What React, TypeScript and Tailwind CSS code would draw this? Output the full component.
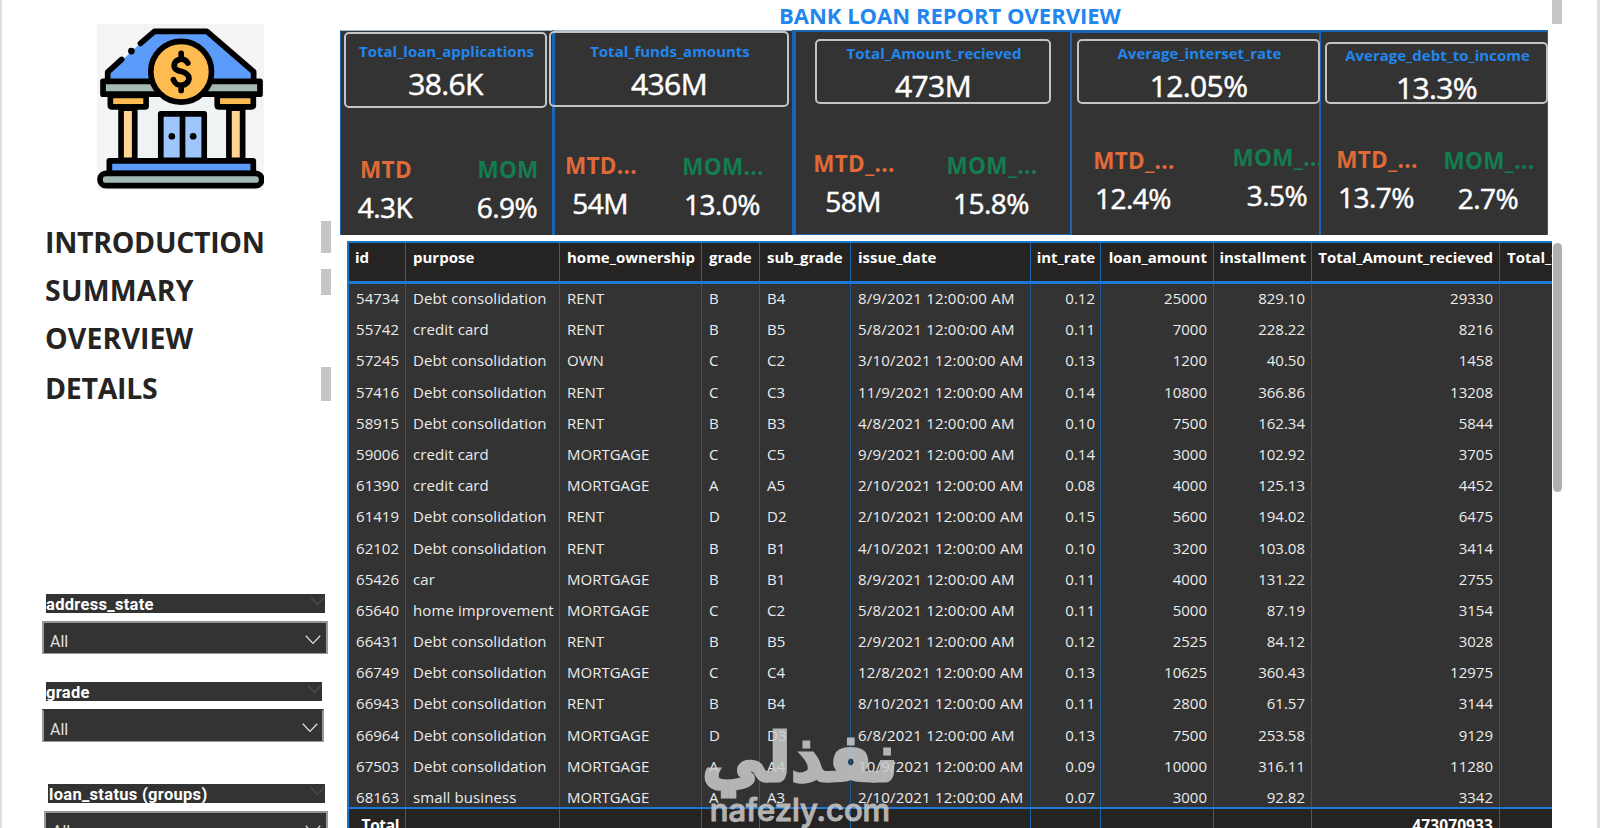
import React from 'react';

interface Metric {
  label: string;
  value: string;
  className: string;
}

interface Kpi {
  title: string;
  value: string;
  panel: string;
  card: string;
  metrics: string;
  mtd: Metric;
  mom: Metric;
}

interface Slicer {
  name: string;
  header: string;
  box: string;
}

const kpis: Kpi[] = [
  {
    title: 'Total_loan_applications',
    value: '38.6K',
    panel: 'w-[212px] border-t border-t-[#a9bccb] border-l border-l-[#1a66b0]',
    card: 'ml-[3px] mt-[1px] h-[76px] w-[203px] pt-[5px]',
    metrics: 'gap-[32px]',
    mtd: { label: 'MTD', value: '4.3K', className: 'mt-[155px] -ml-px' },
    mom: { label: 'MOM', value: '6.9%', className: 'mt-[154.5px]' },
  },
  {
    title: 'Total_funds_amounts',
    value: '436M',
    panel: 'w-[240px] border-t border-t-[#a9bccb] border-l-[3px] border-l-[#1a66b0]',
    card: '-ml-[6px] mt-0 h-[76px] w-[240px] pt-[6px]',
    metrics: 'gap-[32px]',
    mtd: { label: 'MTD...', value: '54M', className: 'mt-[151px]' },
    mom: { label: 'MOM...', value: '13.0%', className: 'mt-[152px]' },
  },
  {
    title: 'Total_Amount_recieved',
    value: '473M',
    panel: 'w-[278px] border-t-2 border-b border-l-4 border-[#1a66b0]',
    card: 'ml-[19px] mt-[7px] h-[65px] w-[236px]',
    metrics: 'pl-[12px] gap-[48px]',
    mtd: { label: 'MTD_...', value: '58M', className: 'mt-[148px]' },
    mom: { label: 'MOM_...', value: '15.8%', className: 'mt-[150px]' },
  },
  {
    title: 'Average_interset_rate',
    value: '12.05%',
    panel: 'w-[249px] border-t-[3px] border-l-2 border-[#1a66b0]',
    card: 'ml-[5px] mt-[6px] h-[65px] w-[243px]',
    metrics: 'pl-[16px] gap-[54px]',
    mtd: { label: 'MTD_...', value: '12.4%', className: 'mt-[144px]' },
    mom: { label: 'MOM_...', value: '3.5%', className: 'mt-[141px]' },
  },
  {
    title: 'Average_debt_to_income',
    value: '13.3%',
    panel: 'w-[229px] border-t-2 border-l-2 border-r border-[#1a66b0]',
    card: 'ml-[4px] mt-[10px] h-[62px] w-[223px] *:-translate-y-px',
    metrics: 'pl-[10px] gap-[22px]',
    mtd: { label: 'MTD_...', value: '13.7%', className: 'mt-[144px]' },
    mom: { label: 'MOM_...', value: '2.7%', className: 'mt-[145px]' },
  },
];

const columns = [
  { name: 'id', width: 'w-[57px]', head: 'pl-[6px] text-left', cell: 'pr-[6px] text-right' },
  { name: 'purpose', width: 'w-[154px]', head: 'pl-[7px] text-left', cell: 'pl-[7px] text-left tracking-[0.1px]' },
  { name: 'home_ownership', width: 'w-[142px]', head: 'pl-[7px] text-left', cell: 'pl-[7px] text-left' },
  { name: 'grade', width: 'w-[58px]', head: 'pl-[7px] text-left', cell: 'pl-[7px] text-left' },
  { name: 'sub_grade', width: 'w-[91px]', head: 'pl-[7px] text-left', cell: 'pl-[7px] text-left' },
  { name: 'issue_date', width: 'w-[180px]', head: 'pl-[7px] text-left', cell: 'pl-[7px] text-left tracking-[0.2px]' },
  { name: 'int_rate', width: 'w-[70px]', head: 'pr-[5px] text-right', cell: 'pr-[5px] text-right' },
  { name: 'loan_amount', width: 'w-[113px]', head: 'pr-[6px] text-right', cell: 'pr-[6px] text-right' },
  { name: 'installment', width: 'w-[98px]', head: 'pr-[5px] text-right', cell: 'pr-[6px] text-right' },
  { name: 'Total_Amount_recieved', width: 'w-[188px]', head: 'pr-[6px] text-right', cell: 'pr-[6px] text-right' },
];

const rows = [
  ['54734', 'Debt consolidation', 'RENT', 'B', 'B4', '8/9/2021 12:00:00 AM', '0.12', '25000', '829.10', '29330'],
  ['55742', 'credit card', 'RENT', 'B', 'B5', '5/8/2021 12:00:00 AM', '0.11', '7000', '228.22', '8216'],
  ['57245', 'Debt consolidation', 'OWN', 'C', 'C2', '3/10/2021 12:00:00 AM', '0.13', '1200', '40.50', '1458'],
  ['57416', 'Debt consolidation', 'RENT', 'C', 'C3', '11/9/2021 12:00:00 AM', '0.14', '10800', '366.86', '13208'],
  ['58915', 'Debt consolidation', 'RENT', 'B', 'B3', '4/8/2021 12:00:00 AM', '0.10', '7500', '162.34', '5844'],
  ['59006', 'credit card', 'MORTGAGE', 'C', 'C5', '9/9/2021 12:00:00 AM', '0.14', '3000', '102.92', '3705'],
  ['61390', 'credit card', 'MORTGAGE', 'A', 'A5', '2/10/2021 12:00:00 AM', '0.08', '4000', '125.13', '4452'],
  ['61419', 'Debt consolidation', 'RENT', 'D', 'D2', '2/10/2021 12:00:00 AM', '0.15', '5600', '194.02', '6475'],
  ['62102', 'Debt consolidation', 'RENT', 'B', 'B1', '4/10/2021 12:00:00 AM', '0.10', '3200', '103.08', '3414'],
  ['65426', 'car', 'MORTGAGE', 'B', 'B1', '8/9/2021 12:00:00 AM', '0.11', '4000', '131.22', '2755'],
  ['65640', 'home improvement', 'MORTGAGE', 'C', 'C2', '5/8/2021 12:00:00 AM', '0.11', '5000', '87.19', '3154'],
  ['66431', 'Debt consolidation', 'RENT', 'B', 'B5', '2/9/2021 12:00:00 AM', '0.12', '2525', '84.12', '3028'],
  ['66749', 'Debt consolidation', 'MORTGAGE', 'C', 'C4', '12/8/2021 12:00:00 AM', '0.13', '10625', '360.43', '12975'],
  ['66943', 'Debt consolidation', 'RENT', 'B', 'B4', '8/10/2021 12:00:00 AM', '0.11', '2800', '61.57', '3144'],
  ['66964', 'Debt consolidation', 'MORTGAGE', 'D', 'D3', '6/8/2021 12:00:00 AM', '0.13', '7500', '253.58', '9129'],
  ['67503', 'Debt consolidation', 'MORTGAGE', 'A', 'A4', '10/9/2021 12:00:00 AM', '0.09', '10000', '316.11', '11280'],
  ['68163', 'small business', 'MORTGAGE', 'A', 'A3', '2/10/2021 12:00:00 AM', '0.07', '3000', '92.82', '3342'],
];

const totals = ['Total', '', '', '', '', '', '', '', '', '473070933'];

const navItems = [
  { name: 'INTRODUCTION', row: 'h-[48px] tracking-[-0.3px]', thumb: 'h-[32px] mt-[3px]' },
  { name: 'SUMMARY', row: 'h-[48px] tracking-[0.2px]', thumb: 'h-[26px] mt-[3px]' },
  { name: 'OVERVIEW', row: 'h-[50px] tracking-[0.1px]', thumb: 'h-0' },
  { name: 'DETAILS', row: 'h-[48px] tracking-[-0.3px]', thumb: 'h-[34px] mt-[3px]' },
];

const slicers: Slicer[] = [
  { name: 'address_state', header: 'ml-[44px] w-[279px]', box: 'ml-[40px] w-[286px] border-t-[#969696] pr-[5px]' },
  { name: 'grade', header: 'ml-[44px] w-[276px]', box: 'ml-[40px] w-[282px] border-t-[#333] pr-[4px]' },
  { name: 'loan_status (groups)', header: 'ml-[46px] w-[277px] pl-px', box: 'ml-[42px] w-[284px] border-t-[#969696] pr-[5px]' },
];

const BankLogo = () => (
  <svg viewBox="52 44 500 497" className="ml-[95px] h-[166px] w-[167px]" stroke="#000" strokeWidth={17} strokeLinejoin="round" strokeLinecap="round">
    <rect x="52" y="44" width="500" height="497" fill="#f4f4f5" stroke="none" />
    <rect x="172" y="262" width="270" height="190" fill="#eff3f3" stroke="none" />
    <path d="M84 212V188L130 150L182 102L224 66H381L521 187V212Z" fill="#5b9cfb" stroke="none" />
    <path d="M84 212V188L126 150M182 102L224 66H381L521 187V212" fill="none" />
    <circle cx="155" cy="125" r="10" fill="#000" stroke="none" />
    <path d="M92 258H199V290Q199 292 195 292H98Q92 292 92 288Z" fill="#fdbb50" />
    <path d="M412 258H520V288Q520 292 514 292H418Q412 292 412 288Z" fill="#fdbb50" />
    <rect x="70" y="216" width="470" height="38" fill="#a4b8b5" />
    <path d="M124 296H165V452H124Z" fill="#fdd491" />
    <path d="M447 296H488V452H447Z" fill="#fdd491" />
    <path d="M243 313H373V452H243Z" fill="#9ec6fc" />
    <path d="M308 313V452" />
    <circle cx="276" cy="380" r="10" fill="#000" stroke="none" />
    <circle cx="340" cy="380" r="10" fill="#000" stroke="none" />
    <rect x="89" y="454" width="431" height="38" fill="#5b9cfb" />
    <rect x="61" y="491" width="484" height="37" rx="18" fill="#a4b8b5" />
    <circle cx="304" cy="187" r="91" fill="#fdbb50" />
    <path d="M324 161C318 150 306 147 297 151C281 156 278 176 292 182C300 186 313 187 321 194C333 204 327 224 308 227C297 229 285 223 281 211M304 132V148M304 229V243" fill="none" />
  </svg>
);

const Chevron = ({ className }: { className: string }) => (
  <svg viewBox="0 0 16 10" className={className} fill="none" strokeWidth={1.3}>
    <path d="M0.8 0.8L8 8.4L15.2 0.8" />
  </svg>
);

const KpiMetric = ({ metric, color }: { metric: Metric; color: string }) => (
  <div className={`flex w-[90px] flex-col items-center whitespace-nowrap ${metric.className}`}>
    <span className={`pl-[2px] text-[22.5px] leading-[30px] font-bold tracking-[0.3px] ${color}`}>{metric.label}</span>
    <span className="text-[28px] leading-[44px] tracking-[-0.5px] text-white [-webkit-text-stroke:0.5px_white]">{metric.value}</span>
  </div>
);

const KpiPanel = ({ kpi }: { kpi: Kpi }) => (
  <section className={`grid h-[205px] shrink-0 grid-rows-[205px] bg-[#333] ${kpi.panel}`}>
    <div className={`relative z-10 col-start-1 row-start-1 flex flex-col items-center rounded-[5px] border-2 border-[#c4c4c4] ${kpi.card}`}>
      <h2 className="pl-[2px] text-[15px] leading-[24px] font-bold whitespace-nowrap text-[#2186ee]">{kpi.title}</h2>
      <p className="text-[30px] leading-[42px] tracking-[-0.6px] text-white [-webkit-text-stroke:0.5px_white]">{kpi.value}</p>
    </div>
    <div className={`col-start-1 row-start-1 -mt-[31px] flex items-start ${kpi.metrics}`}>
      <KpiMetric metric={kpi.mtd} color="text-[#e06a38]" />
      <KpiMetric metric={kpi.mom} color="text-[#137d4f]" />
    </div>
  </section>
);

const LoanTable = () => (
  <div className="flex">
    <div className="ml-[8px] h-[587px] w-[1205px] overflow-hidden border-t-2 border-l-2 border-[#1b77c9] bg-[#333] text-white">
      <div className="flex h-[41px] border-b-[3px] border-[#1f78d8] bg-[#252423] text-[15px] font-bold">
        {columns.map((col) => (
          <div key={col.name} className={`shrink-0 border-r border-[#1b66aa] leading-[29px] whitespace-nowrap ${col.width} ${col.head}`}>
            {col.name}
          </div>
        ))}
        <div className="shrink-0 px-[7px] leading-[29px]">Total_funds</div>
      </div>
      <div className="h-[523px] overflow-hidden text-[15px] text-[#ececec]">
        {rows.map((row) => (
          <div key={row[0]} className="flex h-[31.2px]">
            {row.map((cell, i) => (
              <div key={i} className={`shrink-0 border-r border-[#1b5c96] leading-[28px] whitespace-nowrap ${columns[i].width} ${columns[i].cell}`}>
                {cell}
              </div>
            ))}
          </div>
        ))}
      </div>
      <div className="flex h-[40px] border-t-2 border-[#1f78d8] bg-[#252423] text-[15.5px] font-bold">
        {totals.map((cell, i) => (
          <div key={i} className={`shrink-0 border-r border-[#1b66aa] leading-[32px] ${columns[i].width} ${columns[i].cell} ${i === 0 ? 'tracking-[-0.4px]' : 'tracking-[0.1px]'}`}>
            {cell}
          </div>
        ))}
      </div>
    </div>
    <div className="mt-[2px] ml-[1px] h-[249px] w-[9px] rounded-full bg-[#b0b0b0]" />
  </div>
);

const Watermark = () => (
  <div className="absolute top-[721px] left-[698px] flex w-[200px] flex-col items-center text-[#cbcbcb] opacity-85">
    <span dir="rtl" className="h-[68px] scale-y-105 font-['DejaVu_Sans'] text-[64px] leading-[74px] font-bold whitespace-nowrap [-webkit-text-stroke:3px_#cbcbcb]">نفذلي</span>
    <span className="font-[Inter] text-[31px] leading-[41px] font-medium [-webkit-text-stroke:1px_#cbcbcb]">nafezly.com</span>
  </div>
);

const App: React.FC = () => {
  return (
    <div className="relative flex h-[828px] w-[1600px] overflow-hidden border-r-[3px] border-l-2 border-[#e0e0e0] bg-white font-['Open_Sans',sans-serif]">
      <aside className="w-[337px] shrink-0 pt-[24px]">
        <BankLogo />
        <nav className="mt-[28px]">
          {navItems.map((item) => (
            <div key={item.name} className={`flex items-start justify-between pr-[8px] pl-[43px] ${item.row}`}>
              <a className="text-[28.5px] leading-[49px] font-bold text-[#252423]">{item.name}</a>
              <div className={`w-[10px] bg-[#c6c6c6] ${item.thumb}`} />
            </div>
          ))}
        </nav>
        <div className="mt-[182px] font-[Roboto]">
          {slicers.map((slicer, i) => (
            <div key={slicer.name} className={i === 1 ? 'h-[102px]' : 'h-[88px]'}>
              <div className={`flex h-[19px] items-center justify-between bg-[#333] text-white ${slicer.header}`}>
                <span className="pt-[2px] text-[16.5px] leading-[17px] font-bold tracking-[0.3px]">{slicer.name}</span>
                <Chevron className="mb-1 h-[9px] w-[15px] stroke-[#505050]" />
              </div>
              <div className={`mt-[8px] flex h-[33px] items-center justify-between border-2 border-b border-[#999] bg-[#333] pl-[6px] ${slicer.box}`}>
                <span className="pt-[8px] text-[16px] leading-[20px] text-[#e0e0e0]">All</span>
                <Chevron className="mt-[3px] h-[10px] w-[16px] stroke-[#e0e0e0]" />
              </div>
            </div>
          ))}
        </div>
      </aside>
      <main className="min-w-0 flex-1">
        <header className="flex h-[30px] items-start">
          <h1 className="ml-[440px] w-[773px] text-[22px] leading-[31px] font-bold text-[#2186ee]">BANK LOAN REPORT OVERVIEW</h1>
          <div className="h-[24px] w-[10px] bg-[#c6c6c6]" />
        </header>
        <div className="ml-[1px] flex h-[211px]">
          {kpis.map((kpi) => (
            <KpiPanel key={kpi.title} kpi={kpi} />
          ))}
        </div>
        <LoanTable />
      </main>
      <Watermark />
    </div>
  );
};

export default App;
